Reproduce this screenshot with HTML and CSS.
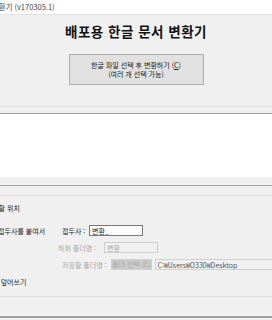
FILE: index.html
```html
<!DOCTYPE html>
<html lang="ko">
<head>
  <meta charset="UTF-8" />
  <title>배포용 한글 문서 변환기</title>
  <link rel="stylesheet" href="styles.css">
</head>
<body>
  <div class="titlebar"><span class="cut-title">배포용 한글 문서 변환기 (v170305.1)</span></div>
  <div class="window">
    <h1>배포용 한글 문서 변환기</h1>
    <div class="btn-row">
      <button class="convert">한글 파일 선택 후 변환하기 (<u>C</u>)<br>(여러 개 선택 가능)</button>
    </div>
    <div class="sep"></div>
    <div class="log"></div>
    <div class="panel">
      <div class="group-title"><span class="cut-group">결과 파일 저장할 위치</span></div>
      <div class="row first">
        <span class="opt"><span class="cut-opt">파일명 앞에 접두사를 붙여서</span></span>
        <span class="lbl">접두사 :</span>
        <input class="field prefix" type="text" value="변환_">
      </div>
      <div class="row">
        <span class="opt"></span>
        <span class="lbl off sub">하위 폴더명 :</span>
        <input class="field sub-field" type="text" value="변환" disabled>
      </div>
      <div class="row">
        <span class="opt"></span>
        <span class="lbl off">저장할 폴더명 :</span>
        <button class="pick" disabled>폴더 선택 (E)</button>
        <input class="field path" type="text" value="C:₩Users₩O330₩Desktop" readonly>
      </div>
      <div class="row last">
        <span class="opt"><span class="cut-over">기존 파일 덮어쓰기</span></span>
      </div>
    </div>
    <div class="bottom"></div>
  </div>
</body>
</html>
```

FILE: styles.css
```css
body {
  margin: 0;
  width: 272px;
  height: 320px;
  overflow: hidden;
  background: #f0f0f0;
  font-family: "Noto Sans CJK KR", "Liberation Sans", sans-serif;
  font-size: 7px;
  color: #222;
}
.titlebar {
  height: 14px;
  background: #fff;
  border-bottom: 1px solid #e2e2e2;
  white-space: nowrap;
  overflow: hidden;
  line-height: 14px;
  font-size: 7.5px;
  color: #444;
}
.cut-title {
  display: inline-block;
  margin-left: -63px;
}
.window {
  background: #f0f0f0;
}
h1 {
  margin: 0;
  padding-top: 6px;
  height: 22px;
  text-align: center;
  font-size: 13.5px;
  font-weight: bold;
  color: #111;
  letter-spacing: 0.5px;
}
.btn-row {
  display: flex;
  justify-content: center;
  padding-top: 11px;
}
.convert {
  width: 135px;
  height: 31px;
  background: #e1e1e1;
  border: 1px solid #adadad;
  font-family: inherit;
  font-size: 7px;
  line-height: 8.5px;
  color: #222;
  padding: 0;
}
.sep {
  margin-top: 21px;
  height: 6px;
  border-top: 1px solid #e2e2e2;
}
.log {
  height: 63px;
  background: #fff;
  border-top: 1px solid #a0a0a0;
}
.panel {
  margin-top: 8px;
  border-top: 1px solid #a0a0a0;
  padding-top: 9px;
}
.group-title {
  border-top: 1px solid #dedede;
  height: 14px;
  padding-top: 8px;
  white-space: nowrap;
  overflow: hidden;
  line-height: 8px;
}
.cut-group {
  display: inline-block;
  margin-left: -44px;
}
.row {
  display: flex;
  align-items: center;
  height: 17px;
  white-space: nowrap;
}
.row.first {
  margin-top: 4px;
}
.opt {
  width: 58px;
  overflow: hidden;
  flex-shrink: 0;
}
.cut-opt {
  display: inline-block;
  margin-left: -38px;
}
.cut-over {
  display: inline-block;
  margin-left: -29px;
}
.lbl {
  margin-left: 4px;
  width: 27px;
  flex-shrink: 0;
}
.lbl.off {
  color: #a8a8a8;
}
.lbl.sub {
  margin-left: 0;
  width: 46px;
}
.row .lbl.off:not(.sub) {
  width: 49px;
  margin-left: 4px;
}
.field {
  height: 11px;
  box-sizing: border-box;
  border: 1px solid #7a7a7a;
  background: #fff;
  font-family: inherit;
  font-size: 7px;
  padding: 0 2px;
  color: #222;
}
.prefix {
  width: 54px;
}
.sub-field {
  width: 54px;
  border-color: #cfcfcf;
  background: #f0f0f0;
  color: #a8a8a8;
}
.pick {
  width: 47px;
  height: 11px;
  padding: 0;
  border: 1px solid #cfcfcf;
  background: #cccccc;
  color: #a8a8a8;
  font-family: inherit;
  font-size: 7px;
  line-height: 9px;
}
.path {
  margin-left: 3px;
  width: 120px;
  flex-shrink: 0;
  border-color: #cfcfcf;
  background: #f0f0f0;
  color: #555;
}
.row.last {
  height: 16px;
  margin-top: 1px;
}
.bottom {
  margin-top: 6px;
  height: 19px;
  border-top: 1px solid #dedede;
  border-bottom: 2px solid #a0a0a0;
}
```
